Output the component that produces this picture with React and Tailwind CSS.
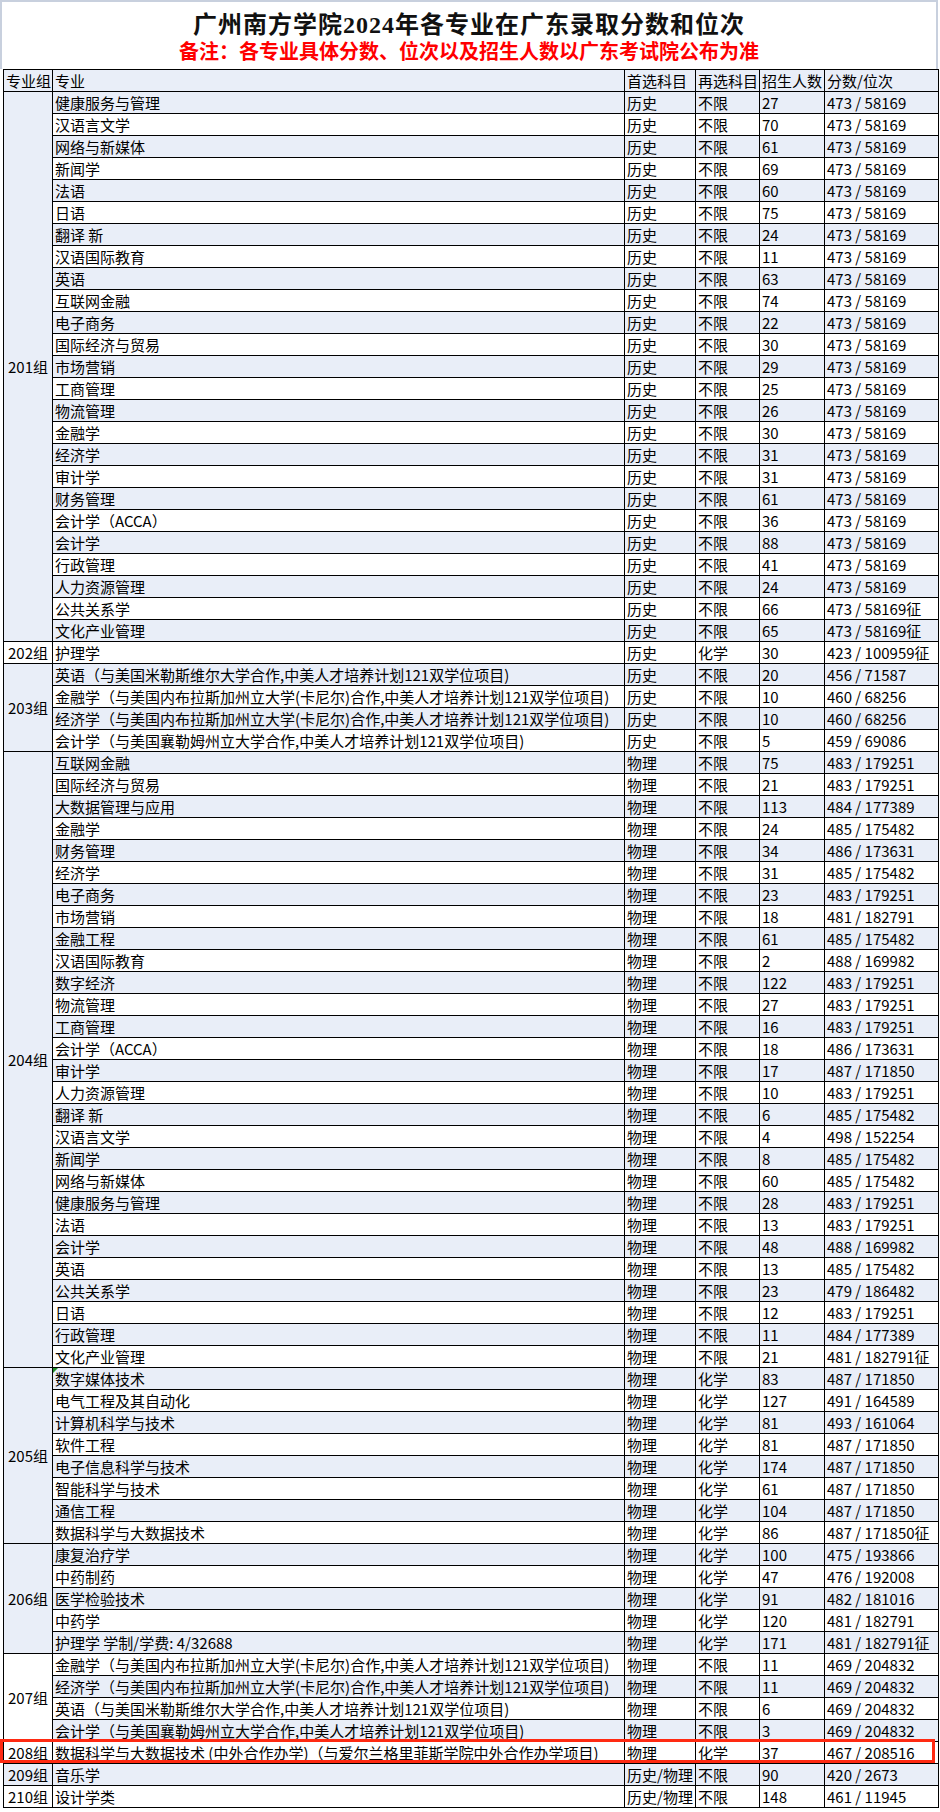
import React from "react";

const J = "中美人才培养计划121双学位项目)";
const EN = "英语（与美国米勒斯维尔大学合作," + J;
const JR = "金融学（与美国内布拉斯加州立大学(卡尼尔)合作," + J;
const JJ = "经济学（与美国内布拉斯加州立大学(卡尼尔)合作," + J;
const KJ = "会计学（与美国襄勒姆州立大学合作," + J;

const groups = [
  {
    name: "201组",
    rows: [
      ["健康服务与管理", "历史", "不限", "27", "473 / 58169"],
      ["汉语言文学", "历史", "不限", "70", "473 / 58169"],
      ["网络与新媒体", "历史", "不限", "61", "473 / 58169"],
      ["新闻学", "历史", "不限", "69", "473 / 58169"],
      ["法语", "历史", "不限", "60", "473 / 58169"],
      ["日语", "历史", "不限", "75", "473 / 58169"],
      ["翻译 新", "历史", "不限", "24", "473 / 58169"],
      ["汉语国际教育", "历史", "不限", "11", "473 / 58169"],
      ["英语", "历史", "不限", "63", "473 / 58169"],
      ["互联网金融", "历史", "不限", "74", "473 / 58169"],
      ["电子商务", "历史", "不限", "22", "473 / 58169"],
      ["国际经济与贸易", "历史", "不限", "30", "473 / 58169"],
      ["市场营销", "历史", "不限", "29", "473 / 58169"],
      ["工商管理", "历史", "不限", "25", "473 / 58169"],
      ["物流管理", "历史", "不限", "26", "473 / 58169"],
      ["金融学", "历史", "不限", "30", "473 / 58169"],
      ["经济学", "历史", "不限", "31", "473 / 58169"],
      ["审计学", "历史", "不限", "31", "473 / 58169"],
      ["财务管理", "历史", "不限", "61", "473 / 58169"],
      ["会计学（ACCA）", "历史", "不限", "36", "473 / 58169"],
      ["会计学", "历史", "不限", "88", "473 / 58169"],
      ["行政管理", "历史", "不限", "41", "473 / 58169"],
      ["人力资源管理", "历史", "不限", "24", "473 / 58169"],
      ["公共关系学", "历史", "不限", "66", "473 / 58169征"],
      ["文化产业管理", "历史", "不限", "65", "473 / 58169征"],
    ],
  },
  { name: "202组", rows: [["护理学", "历史", "化学", "30", "423 / 100959征"]] },
  {
    name: "203组",
    rows: [
      [EN, "历史", "不限", "20", "456 / 71587"],
      [JR, "历史", "不限", "10", "460 / 68256"],
      [JJ, "历史", "不限", "10", "460 / 68256"],
      [KJ, "历史", "不限", "5", "459 / 69086"],
    ],
  },
  {
    name: "204组",
    rows: [
      ["互联网金融", "物理", "不限", "75", "483 / 179251"],
      ["国际经济与贸易", "物理", "不限", "21", "483 / 179251"],
      ["大数据管理与应用", "物理", "不限", "113", "484 / 177389"],
      ["金融学", "物理", "不限", "24", "485 / 175482"],
      ["财务管理", "物理", "不限", "34", "486 / 173631"],
      ["经济学", "物理", "不限", "31", "485 / 175482"],
      ["电子商务", "物理", "不限", "23", "483 / 179251"],
      ["市场营销", "物理", "不限", "18", "481 / 182791"],
      ["金融工程", "物理", "不限", "61", "485 / 175482"],
      ["汉语国际教育", "物理", "不限", "2", "488 / 169982"],
      ["数字经济", "物理", "不限", "122", "483 / 179251"],
      ["物流管理", "物理", "不限", "27", "483 / 179251"],
      ["工商管理", "物理", "不限", "16", "483 / 179251"],
      ["会计学（ACCA）", "物理", "不限", "18", "486 / 173631"],
      ["审计学", "物理", "不限", "17", "487 / 171850"],
      ["人力资源管理", "物理", "不限", "10", "483 / 179251"],
      ["翻译 新", "物理", "不限", "6", "485 / 175482"],
      ["汉语言文学", "物理", "不限", "4", "498 / 152254"],
      ["新闻学", "物理", "不限", "8", "485 / 175482"],
      ["网络与新媒体", "物理", "不限", "60", "485 / 175482"],
      ["健康服务与管理", "物理", "不限", "28", "483 / 179251"],
      ["法语", "物理", "不限", "13", "483 / 179251"],
      ["会计学", "物理", "不限", "48", "488 / 169982"],
      ["英语", "物理", "不限", "13", "485 / 175482"],
      ["公共关系学", "物理", "不限", "23", "479 / 186482"],
      ["日语", "物理", "不限", "12", "483 / 179251"],
      ["行政管理", "物理", "不限", "11", "484 / 177389"],
      ["文化产业管理", "物理", "不限", "21", "481 / 182791征"],
    ],
  },
  {
    name: "205组",
    rows: [
      ["数字媒体技术", "物理", "化学", "83", "487 / 171850"],
      ["电气工程及其自动化", "物理", "化学", "127", "491 / 164589"],
      ["计算机科学与技术", "物理", "化学", "81", "493 / 161064"],
      ["软件工程", "物理", "化学", "81", "487 / 171850"],
      ["电子信息科学与技术", "物理", "化学", "174", "487 / 171850"],
      ["智能科学与技术", "物理", "化学", "61", "487 / 171850"],
      ["通信工程", "物理", "化学", "104", "487 / 171850"],
      ["数据科学与大数据技术", "物理", "化学", "86", "487 / 171850征"],
    ],
  },
  {
    name: "206组",
    rows: [
      ["康复治疗学", "物理", "化学", "100", "475 / 193866"],
      ["中药制药", "物理", "化学", "47", "476 / 192008"],
      ["医学检验技术", "物理", "化学", "91", "482 / 181016"],
      ["中药学", "物理", "化学", "120", "481 / 182791"],
      ["护理学 学制/学费: 4/32688", "物理", "化学", "171", "481 / 182791征"],
    ],
  },
  {
    name: "207组",
    rows: [
      [JR, "物理", "不限", "11", "469 / 204832"],
      [JJ, "物理", "不限", "11", "469 / 204832"],
      [EN, "物理", "不限", "6", "469 / 204832"],
      [KJ, "物理", "不限", "3", "469 / 204832"],
    ],
  },
  {
    name: "208组",
    rows: [
      ["数据科学与大数据技术 (中外合作办学)（与爱尔兰格里菲斯学院中外合作办学项目)", "物理", "化学", "37", "467 / 208516"],
    ],
  },
  { name: "209组", rows: [["音乐学", "历史/物理", "不限", "90", "420 / 2673"]] },
  { name: "210组", rows: [["设计学类", "历史/物理", "不限", "148", "461 / 11945"]] },
];

const cell = "border border-black px-[2px] whitespace-nowrap overflow-hidden";

export default function App() {
  let n = 0;
  const body = [];
  groups.forEach((g) => {
    g.rows.forEach((r, i) => {
      const blue = n % 2 === 0;
      const bg = blue ? "bg-[#e9eef8]" : "bg-white";
      const first = n === 58;
      body.push(
        <tr key={n} className={"h-[22px] " + bg}>
          {i === 0 && (
            <td rowSpan={g.rows.length} className={cell + " text-center align-middle"}>
              {g.name}
            </td>
          )}
          <td className={cell + (first ? " relative" : "")}>
            {first && (
              <span className="absolute left-0 top-0 w-0 h-0 border-t-[5px] border-t-[#1f8f2a] border-r-[5px] border-r-transparent" />
            )}
            {r[0]}
          </td>
          <td className={cell}>{r[1]}</td>
          <td className={cell}>{r[2]}</td>
          <td className={cell}>{r[3]}</td>
          <td className={cell}>{r[4]}</td>
        </tr>
      );
      n++;
    });
  });

  return (
    <div className="w-[940px] bg-white text-black font-['Noto_Sans_CJK_SC',sans-serif]">
      <div className="h-[69px] w-[938px] border-l-2 border-t-2 border-r-2 border-[#c8d0de] flex flex-col items-center">
        <div className="mt-[9px] text-[24px] leading-[28px] font-bold tracking-[1px] text-[#111] font-['Liberation_Serif','Noto_Sans_CJK_SC',serif]">
          广州南方学院2024年各专业在广东录取分数和位次
        </div>
        <div className="text-[20px] leading-[24px] font-bold text-[#ff0000]">
          备注：各专业具体分数、位次以及招生人数以广东考试院公布为准
        </div>
      </div>
      <div className="relative pl-[3px]">
        <table className="table-fixed border-collapse w-[935px] text-[15px] leading-[20px]">
          <colgroup>
            <col className="w-[49px]" />
            <col className="w-[572px]" />
            <col className="w-[71px]" />
            <col className="w-[64px]" />
            <col className="w-[65px]" />
            <col className="w-[114px]" />
          </colgroup>
          <tbody>
            <tr className="h-[22px] bg-[#e9eef8]">
              <td className={cell + " text-center"}>专业组</td>
              <td className={cell}>专业</td>
              <td className={cell}>首选科目</td>
              <td className={cell}>再选科目</td>
              <td className={cell}>招生人数</td>
              <td className={cell}>分数/位次</td>
            </tr>
            {body}
          </tbody>
        </table>
        <div className="absolute left-0 top-[1670px] w-[935px] h-[24px] border-[3px] border-[#ff2a12]" />
      </div>
    </div>
  );
}
